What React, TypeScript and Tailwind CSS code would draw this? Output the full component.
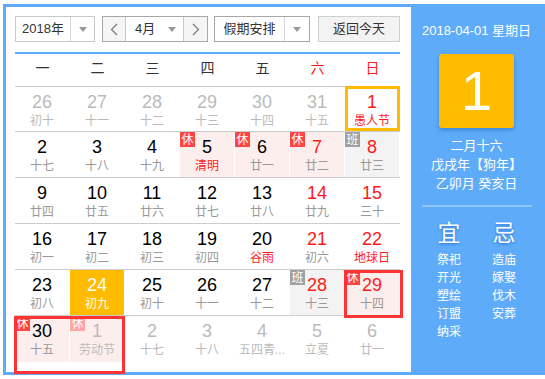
import React from "react";

type Day = {
  n: number;
  l: string;
  other?: boolean;
  red?: boolean;
  fest?: boolean;
  bg?: "pink" | "gray" | "sel";
  badge?: "休" | "班";
  today?: boolean;
};

const rows: Day[][] = [
  [
    { n: 26, l: "初十", other: true },
    { n: 27, l: "十一", other: true },
    { n: 28, l: "十二", other: true },
    { n: 29, l: "十三", other: true },
    { n: 30, l: "十四", other: true },
    { n: 31, l: "十五", other: true },
    { n: 1, l: "愚人节", red: true, fest: true, today: true },
  ],
  [
    { n: 2, l: "十七" },
    { n: 3, l: "十八" },
    { n: 4, l: "十九" },
    { n: 5, l: "清明", fest: true, bg: "pink", badge: "休" },
    { n: 6, l: "廿一", bg: "pink", badge: "休" },
    { n: 7, l: "廿二", red: true, bg: "pink", badge: "休" },
    { n: 8, l: "廿三", red: true, bg: "gray", badge: "班" },
  ],
  [
    { n: 9, l: "廿四" },
    { n: 10, l: "廿五" },
    { n: 11, l: "廿六" },
    { n: 12, l: "廿七" },
    { n: 13, l: "廿八" },
    { n: 14, l: "廿九", red: true },
    { n: 15, l: "三十", red: true },
  ],
  [
    { n: 16, l: "初一" },
    { n: 17, l: "初二" },
    { n: 18, l: "初三" },
    { n: 19, l: "初四" },
    { n: 20, l: "谷雨", fest: true },
    { n: 21, l: "初六", red: true },
    { n: 22, l: "地球日", red: true, fest: true },
  ],
  [
    { n: 23, l: "初八" },
    { n: 24, l: "初九", bg: "sel" },
    { n: 25, l: "初十" },
    { n: 26, l: "十一" },
    { n: 27, l: "十二" },
    { n: 28, l: "十三", red: true, bg: "gray", badge: "班" },
    { n: 29, l: "十四", red: true, bg: "pink", badge: "休" },
  ],
  [
    { n: 30, l: "十五", bg: "pink", badge: "休" },
    { n: 1, l: "劳动节", other: true, bg: "pink", badge: "休" },
    { n: 2, l: "十七", other: true },
    { n: 3, l: "十八", other: true },
    { n: 4, l: "五四青...", other: true },
    { n: 5, l: "立夏", other: true },
    { n: 6, l: "廿一", other: true },
  ],
];

const week = ["一", "二", "三", "四", "五", "六", "日"];

function Tri() {
  return (
    <div className="w-0 h-0 border-x-[4px] border-x-transparent border-t-[5px] border-t-[#999]" />
  );
}

function Chevron({ dir }: { dir: "l" | "r" }) {
  return (
    <svg width="8" height="13" viewBox="0 0 8 13">
      {dir === "l" ? (
        <polyline points="7,1 1.5,6.5 7,12" fill="none" stroke="#777" strokeWidth="1.2" />
      ) : (
        <polyline points="1,1 6.5,6.5 1,12" fill="none" stroke="#777" strokeWidth="1.2" />
      )}
    </svg>
  );
}

function Cell({ d }: { d: Day }) {
  let bg = "";
  if (d.bg === "pink") bg = "bg-[#fdeeee]";
  else if (d.bg === "gray") bg = "bg-[#f3f3f3]";
  else if (d.bg === "sel") bg = "bg-[#ffbb00]";

  let numColor = "text-[#000]";
  if (d.bg === "sel") numColor = "text-white";
  else if (d.other) numColor = "text-[#bbbbbb]";
  else if (d.red) numColor = "text-[#ff1a1a]";

  let lunColor = "text-[#999]";
  if (d.bg === "sel") lunColor = "text-white";
  else if (d.other) lunColor = "text-[#bbbbbb]";
  else if (d.fest) lunColor = "text-[#ff1a1a]";

  let badgeBg = "bg-[#ff4444]";
  if (d.badge === "班") badgeBg = "bg-[#a0a0a0]";
  else if (d.other) badgeBg = "bg-[#ffa3a3]";

  return (
    <div className="relative h-full">
      <div className={`h-full mr-[1px] flex flex-col items-center ${bg}`}>
        <div className={`pt-[5px] text-[18px] leading-[20px] ${numColor}`}>{d.n}</div>
        <div className={`mt-[1px] text-[12px] leading-[16px] whitespace-nowrap ${lunColor}`}>{d.l}</div>
      </div>
      {d.badge && (
        <div
          className={`absolute left-0 top-0 w-[15px] h-[15px] flex items-center justify-center text-[12px] leading-none text-white ${badgeBg}`}
        >
          {d.badge}
        </div>
      )}
      {d.today && (
        <div className="absolute left-0 -top-px right-0 bottom-0 border-[3px] border-[#ffbb00]" />
      )}
    </div>
  );
}

export default function App() {
  return (
    <div
      className="relative w-[545px] h-[379px] bg-white overflow-hidden"
      style={{ fontFamily: '"Liberation Sans", "Noto Sans CJK SC", sans-serif' }}
    >
      <div className="ml-[3px] mt-[4px] w-[542px] h-[371px] flex">
        {/* left part */}
        <div className="w-[408px] h-full border-l-[3px] border-y-[3px] border-[#5eacf9] pl-[9px] pr-[11px] pt-[9px]">
          {/* controls */}
          <div className="flex h-[26px] text-[13px] text-[#333]">
            <div className="flex w-[80px] border border-[#c8c8c8]">
              <div className="w-[54px] flex items-center justify-center">2018年</div>
              <div className="flex-1 border-l border-[#d6d6d6] flex items-center justify-center">
                <Tri />
              </div>
            </div>
            <div className="ml-[7px] flex w-[106px] border border-[#a8a8a8]">
              <div className="w-[22px] bg-[#f5f5f5] flex items-center justify-center">
                <Chevron dir="l" />
              </div>
              <div className="w-[59px] border-x border-[#c8c8c8] flex items-center justify-between pl-[9px] pr-[7px]">
                <span>4月</span>
                <Tri />
              </div>
              <div className="flex-1 bg-[#f5f5f5] flex items-center justify-center">
                <Chevron dir="r" />
              </div>
            </div>
            <div className="ml-[6px] flex w-[96px] border border-[#a8a8a8]">
              <div className="w-[69px] flex items-center justify-center">假期安排</div>
              <div className="flex-1 border-l border-[#d6d6d6] flex items-center justify-center">
                <Tri />
              </div>
            </div>
            <div className="ml-[8px] w-[82px] border border-[#cfcfcf] bg-[#f3f3f3] flex items-center justify-center">
              返回今天
            </div>
          </div>
          {/* blue line */}
          <div className="mt-[10px] h-[2px] bg-[#5eacf9]" />
          {/* week header */}
          <div className="grid grid-cols-7 h-[33px] border-b border-[#cccccc] text-[14px] pb-[3px]">
            {week.map((w, i) => (
              <div
                key={w}
                className={`flex items-center justify-center ${i >= 5 ? "text-[#ff1a1a]" : "text-[#333]"}`}
              >
                {w}
              </div>
            ))}
          </div>
          {/* rows */}
          {rows.map((r, ri) => (
            <div
              key={ri}
              className={`grid grid-cols-7 ${ri === 0 ? "h-[45px]" : "h-[46px]"} ${
                ri < 5 ? "border-b border-[#cccccc]" : ""
              }`}
            >
              {r.map((d, ci) => (
                <Cell key={ci} d={d} />
              ))}
            </div>
          ))}
        </div>
        {/* right panel */}
        <div className="w-[134px] h-full bg-[#5eacf9] pr-[3px] flex flex-col items-center text-white">
          <div className="mt-[18px] text-[13px] leading-[18px] whitespace-nowrap">2018-04-01 星期日</div>
          <div className="mt-[14px] w-[75px] h-[74px] bg-[#ffbb00] rounded-[3px] shadow-[0_2px_4px_rgba(0,60,140,0.35)] flex items-center justify-center text-[56px] leading-none">
            1
          </div>
          <div className="mt-[8px] text-[13px] leading-[19px] text-center">
            <div>二月十六</div>
            <div>戊戌年【狗年】</div>
            <div>乙卯月 癸亥日</div>
          </div>
          <div className="mt-[12px] w-[110px] h-[2px] bg-[#8ec6fb]" />
          <div className="mt-[12px] flex">
            <div className="w-[55px] flex flex-col items-center">
              <div className="text-[23px] leading-[28px] [text-shadow:0_1px_3px_rgba(20,90,190,0.7)]">宜</div>
              <div className="mt-[4px] text-[12px] leading-[18px] flex flex-col items-center">
                <div>祭祀</div>
                <div>开光</div>
                <div>塑绘</div>
                <div>订盟</div>
                <div>纳采</div>
              </div>
            </div>
            <div className="w-[55px] flex flex-col items-center">
              <div className="text-[23px] leading-[28px] [text-shadow:0_1px_3px_rgba(20,90,190,0.7)]">忌</div>
              <div className="mt-[4px] text-[12px] leading-[18px] flex flex-col items-center">
                <div>造庙</div>
                <div>嫁娶</div>
                <div>伐木</div>
                <div>安葬</div>
              </div>
            </div>
          </div>
        </div>
      </div>
      {/* annotation boxes */}
      <div className="absolute left-[14px] top-[316px] w-[111px] h-[58px] border-[3px] border-[#ff3333]" />
      <div className="absolute left-[344px] top-[270px] w-[59px] h-[48px] border-[3px] border-[#ff3333]" />
    </div>
  );
}
